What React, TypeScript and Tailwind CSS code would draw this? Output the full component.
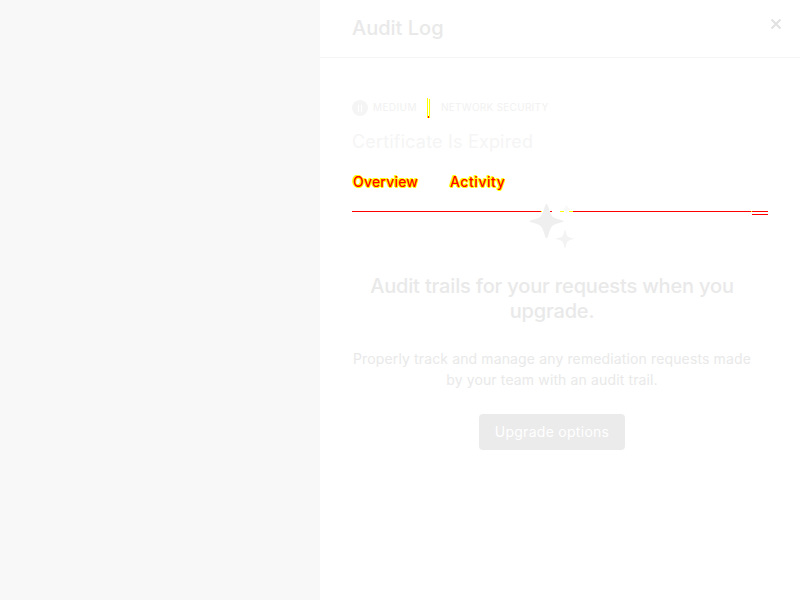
const tabText =
  "text-[#ff0000] [text-shadow:1px_0_#ff0,-1px_0_#ff0,0_1px_#ff0,0_-1px_#ff0,1px_1px_#ff0,-1px_-1px_#ff0]";

function Sparkles() {
  return (
    <svg width="48" height="48" viewBox="0 0 48 48" className="block">
      <path d="M18.5 1C19.5 1 20 3 21 6C23 13 24 14.5 31 16.5C34 17.3 35.5 17.7 35.5 18.2C35.5 18.7 34 19.2 31 20C24 22 23 23.5 21 30C20 33 19.5 35.3 18.5 35.3C17.5 35.3 17 33 16 30C14 23.5 13 22 6 20C3 19.2 1.5 18.7 1.5 18.2C1.5 17.7 3 17.3 6 16.5C13 14.5 14 13 16 6C17 3 17.5 1 18.5 1Z" fill="#efefef" />
      <path d="M37 26C38 29 38.5 33 40.5 34C43 35 44.5 35.2 46.5 35.8C44.5 36.5 43 36.7 40.5 37.7C38.5 38.7 38 43 37 46C36 43 35.5 38.7 33.5 37.7C31 36.7 29 36.5 27 35.8C29 35.2 31 35 33.5 34C35.5 33 36 29 37 26Z" fill="#f3f3f3" />
      <path d="M38.5 1.5L40 5L43 6.5L40 8L38.5 11.5L37 8L34 6.5L37 5Z" fill="#f8f8f8" />
    </svg>
  );
}

export default function App() {
  return (
    <div className="flex h-[600px] w-[800px] overflow-hidden bg-[#f8f8f8] font-['Inter',sans-serif]">
      <div className="w-[320px] shrink-0" />
      <main className="w-[480px] bg-white">
        <header className="flex h-[58px] items-start justify-between border-b border-[#f5f5f5] pl-8 pr-[18px]">
          <h1 className="pt-[14px] text-[20px] font-medium leading-7 text-[#e9e9e9]">Audit Log</h1>
          <button aria-label="Close" className="mt-[18px]">
            <svg width="12" height="12" viewBox="0 0 12 12" stroke="#e2e2e2" strokeWidth="2">
              <path d="M1.5 1.5L10.5 10.5M10.5 1.5L1.5 10.5" />
            </svg>
          </button>
        </header>
        <section className="px-8">
          <div className="mt-10 flex h-5 items-center text-[10px] text-[#f1f1f1]">
            <span className="mr-[5px] flex size-4 items-center justify-center gap-[2px] rounded-full bg-[#f5f5f5]">
              <i className="h-[7px] w-px bg-white" />
              <i className="h-[7px] w-px bg-white" />
            </span>
            <span className="w-[54px] pb-[2px] tracking-[0.4px]">MEDIUM</span>
            <span className="flex h-5 w-[14px]">
              <i className="h-5 w-px bg-[#ffff00]" />
              <i className="mt-[18px] h-[2px] w-px bg-[#ff0000]" />
              <i className="mt-px h-[19px] w-px bg-[#ffff00]" />
            </span>
            <span className="whitespace-nowrap pb-[2px] tracking-[0.27px]">NETWORK SECURITY</span>
          </div>
          <h2 className="mt-[10px] text-[18px] leading-7 tracking-[0.18px] text-[#f5f5f5]">Certificate Is Expired</h2>
          <div className="mt-4 flex h-[39px] items-start pl-px text-[14px] font-medium leading-5">
            <span className={"w-[97px] tracking-[0.2px] " + tabText}>Overview</span>
            <span className={"tracking-[0.55px] " + tabText}>Activity</span>
          </div>
          <div className="flex h-px">
            <i className="w-[189px] bg-[#ff0000]" />
            <i className="w-px bg-[#ffff00]" />
            <i className="w-2" />
            <i className="w-[2px] bg-[#ff0000]" />
            <i className="w-2" />
            <i className="w-1 bg-[#ffff00]" />
            <i className="w-[5px]" />
            <i className="w-1 bg-[#ffff00]" />
            <i className="w-[178px] bg-[#ff0000]" />
            <i className="w-px bg-[#ffff00]" />
            <i className="w-4 bg-[#ff0000]" />
          </div>
          <div className="ml-auto mt-[2px] h-px w-4 bg-[#ff0000]" />
          <div className="w-[400px]">
            <div className="-mt-[12px] flex justify-center"><Sparkles /></div>
            <h3 className="mt-[23px] whitespace-nowrap text-center text-[20px] font-medium leading-[25px] tracking-[-0.16px] text-[#e9e9e9]">
              Audit trails for your requests when you<br />upgrade.
            </h3>
            <p className="mt-6 whitespace-nowrap text-center text-[14px] leading-[21px] tracking-[0.13px] text-[#e9e9e9]">
              Properly track and manage any remediation requests made<br />by your team with an audit trail.
            </p>
            <div className="mt-6 flex justify-center">
              <button className="h-9 w-[146px] rounded-[4px] bg-[#ebebeb] pb-[2px] text-[14px] tracking-[0.28px] text-white">Upgrade options</button>
            </div>
          </div>
        </section>
      </main>
    </div>
  );
}
